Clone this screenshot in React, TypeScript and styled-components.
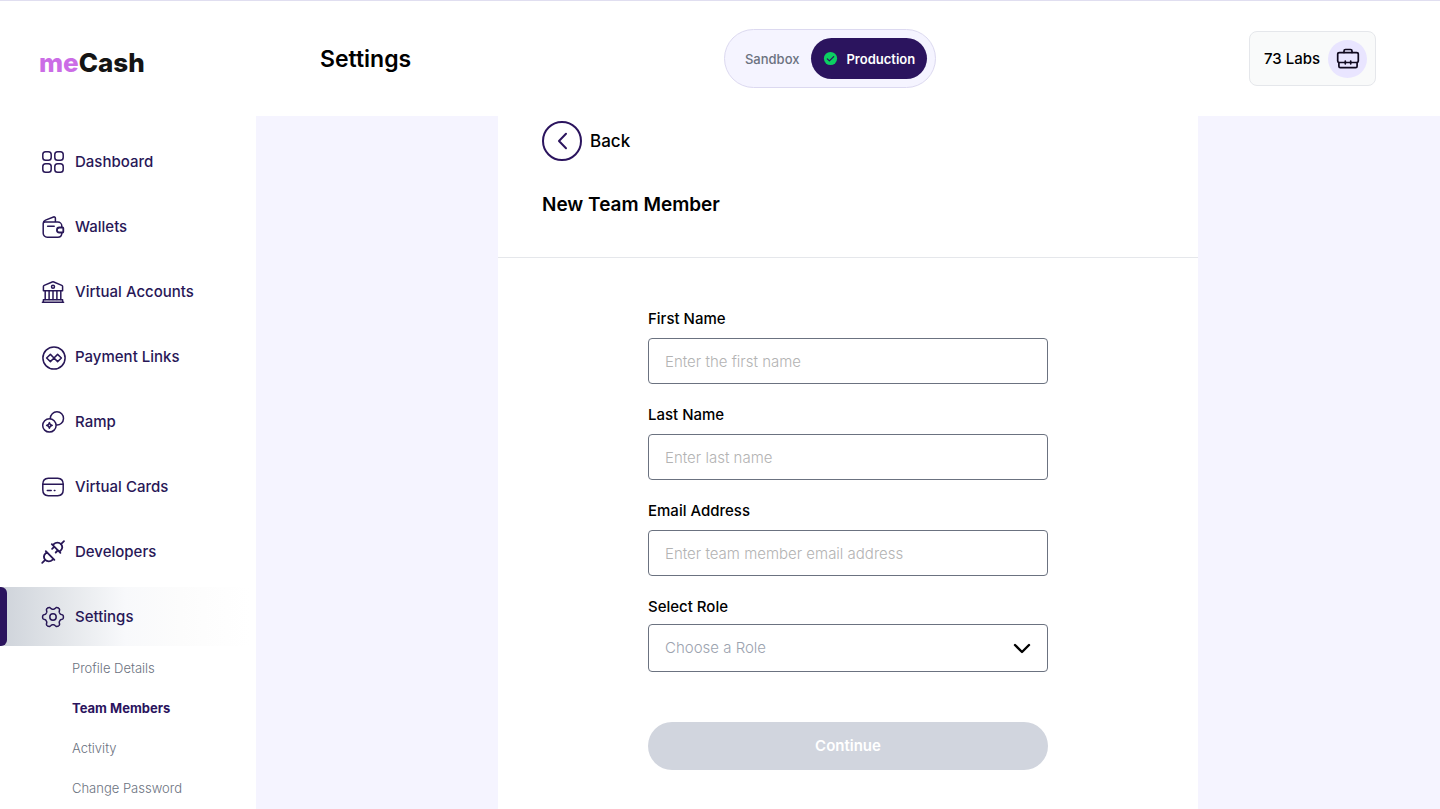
import React from "react";
import styled, { createGlobalStyle, css } from "styled-components";

const color = {
  ink: "#281757",
  brand: "#2b145e",
  lilac: "#f5f4ff",
  grey: "#6b7280",
  line: "#e5e7eb",
};

const GlobalStyle = createGlobalStyle`
  *, *::before, *::after { box-sizing: border-box; }
  body {
    margin: 0;
    background: #fff;
    color: #000;
    font-family: Inter, "Liberation Sans", sans-serif;
    font-size: 15px;
    line-height: 24px;
  }
  h1, h2, ul { margin: 0; padding: 0; }
  ul { list-style: none; }
  a { color: inherit; text-decoration: none; }
  button, input, select { font: inherit; }
  svg { display: block; flex: none; }
`;

const Page = styled.div`
  display: grid;
  grid-template-columns: 256px minmax(0, 1fr);
  grid-template-rows: auto 1fr;
  min-height: 100vh;
  border-top: 1px solid #e0def0;
`;

const Brand = styled.a`
  display: flex;
  align-items: center;
  height: 115px;
  padding: 8px 0 0 39px;
  font-size: 26px;
  font-weight: 800;
  color: #141414;
`;

const BrandAccent = styled.span`
  color: #cb6ce6;
`;

const Header = styled.header`
  display: flex;
  align-items: center;
  justify-content: space-between;
  height: 115px;
  padding: 0 64px;
`;

const PageTitle = styled.h1`
  font-size: 23px;
  font-weight: 600;
  line-height: 32px;
`;

const Toggle = styled.div`
  display: flex;
  align-items: center;
  height: 59px;
  padding: 0 8px;
  border: 1px solid #dcd9f0;
  border-radius: 30px;
  background: ${color.lilac};
`;

const ToggleOption = styled.button<{ $active?: boolean }>`
  display: flex;
  align-items: center;
  gap: 8px;
  height: 41px;
  padding: 0 12px;
  border: 0;
  border-radius: 21px;
  background: ${(p) => (p.$active ? color.brand : "transparent")};
  color: ${(p) => (p.$active ? "#fff" : color.grey)};
  font-size: 13px;
  font-weight: ${(p) => (p.$active ? 600 : 500)};
`;

const Account = styled.button`
  display: flex;
  align-items: center;
  gap: 8px;
  height: 55px;
  padding: 0 8px 0 14px;
  border: 1px solid ${color.line};
  border-radius: 8px;
  background: #f9fafa;
  color: #000;
  font-weight: 500;
`;

const AccountBadge = styled.span`
  display: grid;
  place-items: center;
  width: 39px;
  height: 38px;
  border-radius: 50%;
  background: #e9e5ff;
`;

const Sidebar = styled.nav`
  padding-top: 16px;
`;

const NavList = styled.ul`
  display: grid;
  gap: 6px;
`;

const NavLink = styled.a<{ $active?: boolean }>`
  display: flex;
  align-items: center;
  gap: 9px;
  height: 59px;
  padding-left: 40px;
  color: ${color.ink};
  font-weight: 500;
  line-height: 26px;
  ${(p) =>
    p.$active &&
    css`
      background: linear-gradient(90deg, #ced3da 0, #e2e5e9 60px, #f8f9fb 125px, #fcfcfc 180px, #fff 250px);
      padding-left: 0;
      &::before {
        content: "";
        width: 7px;
        height: 59px;
        margin-right: 24px;
        border-radius: 0 6px 6px 0;
        background: ${color.brand};
      }
    `}
`;

const SubList = styled.ul`
  padding: 2px 0 0 72px;
`;

const SubLink = styled.a<{ $active?: boolean }>`
  display: block;
  font-size: 13px;
  line-height: 40px;
  font-weight: ${(p) => (p.$active ? 700 : 300)};
  color: ${(p) => (p.$active ? color.brand : color.grey)};
`;

const Main = styled.main`
  display: flex;
  justify-content: center;
  background: ${color.lilac};
`;

const Panel = styled.section`
  width: 100%;
  max-width: 700px;
  background: #fff;
`;

const PanelHead = styled.div`
  padding: 5px 44px 36px;
  border-bottom: 1px solid ${color.line};
`;

const BackButton = styled.button`
  display: flex;
  align-items: center;
  gap: 8px;
  padding: 0;
  border: 0;
  background: none;
  color: #000;
  font-size: 17px;
  font-weight: 500;
`;

const PanelTitle = styled.h2`
  margin-top: 28px;
  font-size: 19px;
  font-weight: 600;
  line-height: 32px;
`;

const Form = styled.form`
  display: grid;
  gap: 18px;
  max-width: 400px;
  margin: 0 auto;
  padding: 48px 0 39px;
`;

const Field = styled.div<{ $gap?: number }>`
  display: grid;
  gap: ${(p) => p.$gap ?? 6}px;
`;

const Label = styled.label`
  font-weight: 500;
  line-height: 26px;
`;

const control = css`
  width: 100%;
  border: 1px solid ${color.grey};
  border-radius: 4px;
  background: #fff;
  padding: 0 16px;
  font-weight: 300;
`;

const TextInput = styled.input`
  ${control}
  height: 46px;
  &::placeholder { color: #b3b3b3; opacity: 1; }
`;

const SelectWrap = styled.div`
  position: relative;
  svg {
    position: absolute;
    top: 16px;
    right: 17px;
    pointer-events: none;
  }
`;

const Select = styled.select`
  ${control}
  display: block;
  appearance: none;
  height: 48px;
  color: #9ca3af;
`;

const Submit = styled.button`
  height: 48px;
  margin-top: 32px;
  border: 0;
  border-radius: 24px;
  background: #d1d5de;
  color: #fff;
  font-weight: 600;
`;

/* Outline of a six-toothed gear, with soft shoulders between tooth and valley. */
function gearPath(center: number, radius: number, depth: number) {
  const steps = 144;
  const points = Array.from({ length: steps }, (_, i) => {
    const a = (i / steps) * Math.PI * 2;
    const r = radius + (depth * Math.tanh(1.8 * Math.cos(6 * a))) / Math.tanh(1.8);
    return `${(center + r * Math.cos(a)).toFixed(2)} ${(center + r * Math.sin(a)).toFixed(2)}`;
  });
  return `M${points.join("L")}Z`;
}

type IconProps = { children: React.ReactNode };
const NavIcon = ({ children }: IconProps) => (
  <svg width="26" height="26" viewBox="0 0 26 26" fill="none" stroke={color.ink} strokeWidth="1.5" strokeLinecap="round" strokeLinejoin="round" aria-hidden="true">
    {children}
  </svg>
);

const icons = {
  dashboard: (
    <NavIcon>
      <rect x="2.8" y="2.8" width="8.4" height="8.4" rx="2.8" />
      <rect x="14.8" y="2.8" width="8.4" height="8.4" rx="2.8" />
      <rect x="2.8" y="14.8" width="8.4" height="8.4" rx="2.8" />
      <rect x="14.8" y="14.8" width="8.4" height="8.4" rx="2.8" />
    </NavIcon>
  ),
  wallet: (
    <NavIcon>
      <path d="M3.2 9.4v9.8a4 4 0 0 0 4 4h10.6a4 4 0 0 0 4-3.6v-.9M21.8 13.300V12a4 4 0 0 0-4-4H5.200c-1.200 0-2 .5-2 1.400 0-1.600.8-2.700 2.300-3.300l8-3.100c1-.4 1.900.3 1.900 1.300V8" />
      <path d="M7.600 12.200h6.600" />
      <path d="M22.600 13.500h-3.200a2.500 2.500 0 0 0 0 5h3.200c.5 0 .7-.3.700-.7v-3.600c0-.4-.2-.7-.7-.7Z" strokeWidth="1.800" />
    </NavIcon>
  ),
  bank: (
    <NavIcon>
      <path d="M3.400 11.800V7.600c0-.6.3-1 .8-1.200l8-3.400c.5-.2 1.100-.2 1.600 0l8 3.400c.5.200.8.6.8 1.200v4.200Z" />
      <circle cx="13" cy="7.800" r="1.500" />
      <path d="M5.200 12v8.500M9.100 12v8.500M13 12v8.500M16.900 12v8.500M20.800 12v8.500" />
      <path d="M3.400 20.800h19.200v2.500H3.400ZM2.400 23.300h21.200" />
    </NavIcon>
  ),
  link: (
    <NavIcon>
      <circle cx="14" cy="14" r="11.100" />
      <path d="M14 14l3.600-3.600 3.800 3.600-3.800 3.600ZM14 14l-3.600-3.600L6.600 14l3.800 3.600Z" />
    </NavIcon>
  ),
  ramp: (
    <NavIcon>
      <circle cx="9.400" cy="16.400" r="6.700" />
      <path d="M10.300 9.400a6.600 6.600 0 1 1 6.300 6.600" />
      <path d="M9.400 13.600l.9 1.900 1.900.9-1.900.9-.9 1.900-.9-1.900-1.900-.9 1.900-.9Z" />
    </NavIcon>
  ),
  card: (
    <NavIcon>
      <path d="M2.800 10.300c0-4.100 1.500-5.800 5.500-6h9.400c4 .2 5.500 1.900 5.500 6v5.400c0 4.100-1.500 5.800-5.500 6H8.300c-4-.2-5.500-1.900-5.500-6Z" />
      <path d="M2.800 10.300h20.400M7.300 16.600h3.900M14.300 16.600h.6" />
    </NavIcon>
  ),
  plug: (
    <NavIcon>
      <g strokeWidth="1.800">
        <path d="M2.200 23.900l3-3M21 5.100l3-3" />
        <path d="M5.200 20.900c-1.600-2-1.400-4.700.4-6.500l1.200-1.200 6.600 6.600-1 1c-1.900 1.900-5.200 2-7.200.1ZM5.800 12.200l8.600 8.600" />
        <path d="M21 5.100c1.600 2 1.400 4.700-.4 6.500l-1.200 1.200-6.600-6.600 1-1c1.900-1.900 5.200-2 7.200-.1ZM11.800 5.200l8.600 8.600" />
        <path d="M14.100 7.900l-2 2M17.700 11.500l-2 2" />
      </g>
    </NavIcon>
  ),
  gear: (
    <NavIcon>
      <circle cx="13" cy="13" r="3.200" />
      <path d={gearPath(13, 9.1, 1.3)} />
    </NavIcon>
  ),
};

const navItems = [
  { label: "Dashboard", icon: icons.dashboard },
  { label: "Wallets", icon: icons.wallet },
  { label: "Virtual Accounts", icon: icons.bank },
  { label: "Payment Links", icon: icons.link },
  { label: "Ramp", icon: icons.ramp },
  { label: "Virtual Cards", icon: icons.card },
  { label: "Developers", icon: icons.plug },
  { label: "Settings", icon: icons.gear, active: true },
];

const subItems = ["Profile Details", "Team Members", "Activity", "Change Password"];

const textFields = [
  { id: "first-name", label: "First Name", hint: "Enter the first name", type: "text" },
  { id: "last-name", label: "Last Name", hint: "Enter last name", type: "text" },
  { id: "email", label: "Email Address", hint: "Enter team member email address", type: "email" },
];

export default function App() {
  return (
    <>
      <GlobalStyle />
      <Page>
        <Brand href="#">
          <BrandAccent>me</BrandAccent>Cash
        </Brand>
        <Header>
          <PageTitle>Settings</PageTitle>
          <Toggle>
            <ToggleOption type="button">Sandbox</ToggleOption>
            <ToggleOption type="button" $active>
              <svg width="15" height="15" viewBox="0 0 15 15" fill="none" aria-hidden="true">
                <circle cx="7.500" cy="7.500" r="6.600" fill="#0ccf62" />
                <path d="M4.300 7.800l2.100 2.100 4.300-4.300" stroke={color.brand} strokeWidth="1.200" strokeLinecap="round" strokeLinejoin="round" />
              </svg>
              Production
            </ToggleOption>
          </Toggle>
          <Account type="button">
            73 Labs
            <AccountBadge>
              <svg width="24" height="24" viewBox="0 0 24 24" fill="none" stroke="#10091f" strokeWidth="1.700" strokeLinecap="round" strokeLinejoin="round" aria-hidden="true">
                <path d="M8 5.500V4c0-1 .7-1.500 1.500-1.500h5c.8 0 1.500.5 1.500 1.500v1.500" />
                <path d="M3.400 5.600h17.200c1 0 1.700.7 1.700 1.600v6.700c0 .9-.7 1.600-1.600 1.600H3.300c-.9 0-1.600-.7-1.600-1.600V7.200c0-.9.700-1.600 1.700-1.600Z" />
                <path d="M2.900 15.500v3.700c0 .8.600 1.400 1.400 1.400h15.400c.8 0 1.400-.6 1.400-1.400v-3.700M9.300 14v2.800M14.700 14v2.800" />
              </svg>
            </AccountBadge>
          </Account>
        </Header>
        <Sidebar aria-label="Main">
          <NavList>
            {navItems.map((item) => (
              <li key={item.label}>
                <NavLink href="#" $active={item.active}>
                  {item.icon}
                  {item.label}
                </NavLink>
              </li>
            ))}
          </NavList>
          <SubList>
            {subItems.map((label) => (
              <li key={label}>
                <SubLink href="#" $active={label === "Team Members"}>
                  {label}
                </SubLink>
              </li>
            ))}
          </SubList>
        </Sidebar>
        <Main>
          <Panel>
            <PanelHead>
              <BackButton type="button">
                <svg width="40" height="40" viewBox="0 0 40 40" fill="none" stroke={color.brand} strokeWidth="2" strokeLinecap="round" strokeLinejoin="round" aria-hidden="true">
                  <circle cx="20" cy="20" r="19" />
                  <path d="M24 12.800l-7 7.200 7 7.200" />
                </svg>
                Back
              </BackButton>
              <PanelTitle>New Team Member</PanelTitle>
            </PanelHead>
            <Form>
              {textFields.map((f) => (
                <Field key={f.id}>
                  <Label htmlFor={f.id}>{f.label}</Label>
                  <TextInput id={f.id} type={f.type} placeholder={f.hint} />
                </Field>
              ))}
              <Field $gap={4}>
                <Label htmlFor="role">Select Role</Label>
                <SelectWrap>
                  <Select id="role" defaultValue="">
                    <option value="">Choose a Role</option>
                  </Select>
                  <svg width="18" height="16" viewBox="0 0 18 16" fill="none" stroke="#000" strokeWidth="2.400" strokeLinecap="round" strokeLinejoin="round" aria-hidden="true">
                    <path d="M2 5l7 7 7-7" />
                  </svg>
                </SelectWrap>
              </Field>
              <Submit type="submit">Continue</Submit>
            </Form>
          </Panel>
        </Main>
      </Page>
    </>
  );
}
